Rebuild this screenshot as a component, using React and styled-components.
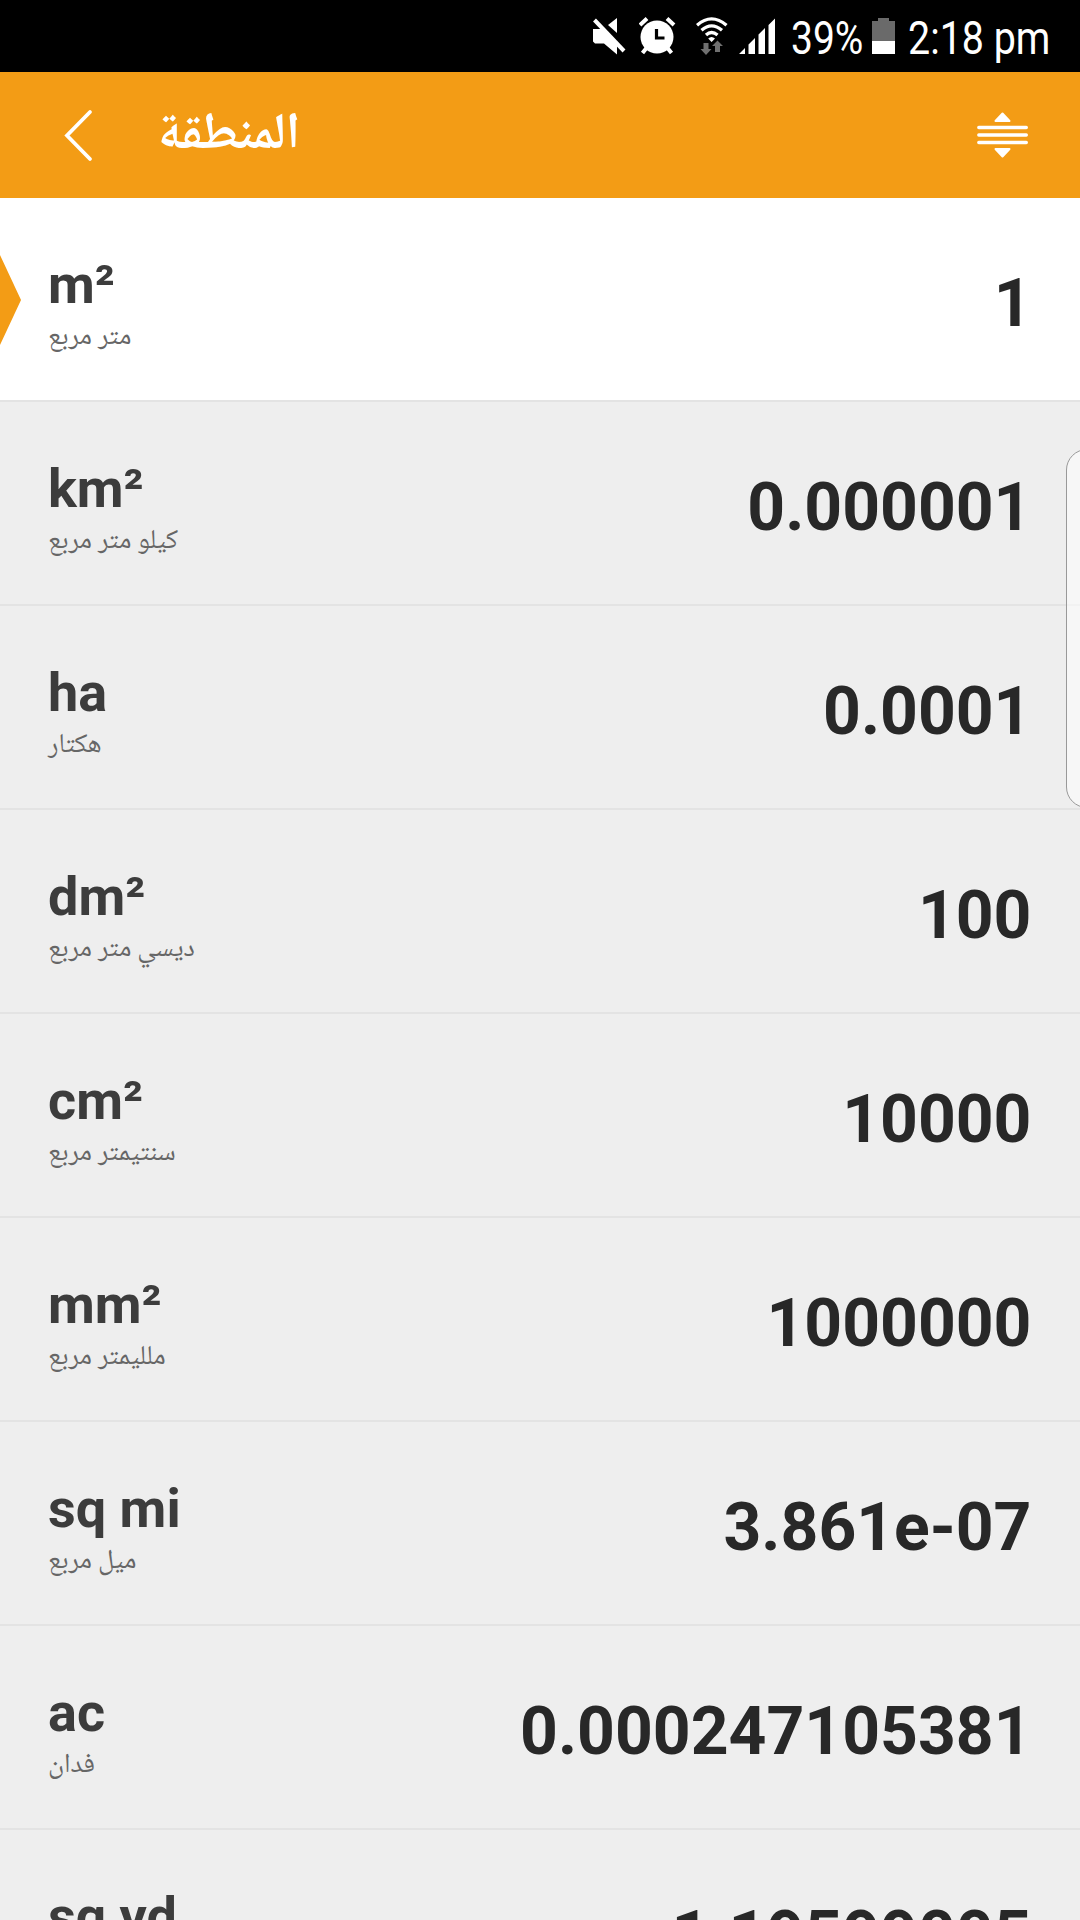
import React from 'react';
import styled, { createGlobalStyle } from 'styled-components';

const orange = '#f39c15';
const latin = `Roboto, 'Liberation Sans', sans-serif`;
const arabic = `'Noto Naskh Arabic', 'Noto Sans Arabic', 'DejaVu Sans', sans-serif`;

const GlobalStyle = createGlobalStyle`
  * {
    box-sizing: border-box;
  }

  body {
    margin: 0;
    background-color: #eeeeee;
    overflow: hidden;
  }
`;

const Screen = styled.div`
  position: relative;
  width: 1080px;
  height: 1920px;
  overflow: hidden;
  display: flex;
  flex-direction: column;
  font-family: ${latin};
  background-color: #eeeeee;
`;

const StatusBar = styled.div`
  flex: none;
  height: 72px;
  padding-left: 592px;
  display: flex;
  align-items: center;
  background-color: #000;
  color: #fff;

  svg {
    flex: none;
    display: block;
  }
`;

const StatusText = styled.div`
  flex: none;
  width: ${({ width }) => width}px;
  height: 72px;
  line-height: 76px;
  font-size: 46px;
  white-space: nowrap;

  span {
    display: inline-block;
    transform: scaleX(${({ stretch }) => stretch});
    transform-origin: left center;
  }
`;

const Gap = styled.div`
  flex: none;
  width: ${({ size }) => size}px;
`;

const Header = styled.header`
  flex: none;
  height: 126px;
  padding: 0 51px 0 64px;
  display: flex;
  align-items: center;
  background-color: ${orange};
`;

const HeaderTitle = styled.h1`
  flex: 1;
  margin: 0 0 0 64px;
  padding-top: 3px;
  color: #fff;
  font-family: ${arabic};
  font-size: 51px;
  font-weight: 700;
  line-height: 60px;
`;

const UnitRow = styled.div`
  position: relative;
  flex: none;
  height: 204px;
  padding: 0 48.5px 0 48px;
  display: flex;
  align-items: center;
  justify-content: space-between;
  border-bottom: 2px solid #e3e3e3;
  background-color: ${({ active }) => (active ? '#fff' : '#eeeeee')};
`;

const ActiveMarker = styled.svg`
  position: absolute;
  left: 0;
  top: 57px;
`;

const UnitLabel = styled.div`
  padding-top: 7px;
`;

const Symbol = styled.div`
  height: 64px;
  line-height: 64px;
  font-size: 54px;
  font-weight: 700;
  color: #3c3c3c;
`;

const UnitName = styled.div`
  height: 36px;
  line-height: 43px;
  font-family: ${arabic};
  font-size: 27.3px;
  color: #666;
`;

const Amount = styled.div`
  padding-top: 9px;
  font-size: 66px;
  font-weight: 700;
  color: #282828;
`;

const EdgeHandle = styled.div`
  position: absolute;
  top: 449px;
  left: 1065.5px;
  width: 42px;
  height: 359px;
  border: 1.5px solid #999;
  border-radius: 21px;
  background-color: rgba(255, 255, 255, 0.55);
`;

const units = [
  { symbol: 'm²', name: 'متر مربع', amount: '1' },
  { symbol: 'km²', name: 'كيلو متر مربع', amount: '0.000001' },
  { symbol: 'ha', name: 'هكتار', amount: '0.0001' },
  { symbol: 'dm²', name: 'ديسي متر مربع', amount: '100' },
  { symbol: 'cm²', name: 'سنتيمتر مربع', amount: '10000' },
  { symbol: 'mm²', name: 'ملليمتر مربع', amount: '1000000' },
  { symbol: 'sq mi', name: 'ميل مربع', amount: '3.861e-07' },
  { symbol: 'ac', name: 'فدان', amount: '0.000247105381' },
  { symbol: 'sq yd', name: 'ياردة مربعة', amount: '1.19599005' }
];

function MuteIcon() {
  return (
    <svg width="36" height="38" viewBox="0 0 36 38" fill="#fff">
      <path d="M25 1v15L16 8Z" />
      <path d="M3.500 3 32.500 34" stroke="#000" strokeWidth="7" />
      <path d="M2.500 3 32 34" stroke="#fff" strokeWidth="4" />
      <path d="M1 12h9l15 15v10.500L12 26.500H3L1 24.500Z" />
    </svg>
  );
}

function AlarmIcon() {
  return (
    <svg width="38" height="38" viewBox="0 0 38 38" fill="none">
      <circle cx="18" cy="20" r="16.500" fill="#fff" />
      <path
        d="M1 8 8 1.500M28 1.500 35 8M7.500 31 3.500 36M28.500 31l4 5"
        stroke="#fff"
        strokeWidth="4"
      />
      <path d="M17.500 12v9h8" stroke="#000" strokeWidth="3.200" />
    </svg>
  );
}

function WifiIcon() {
  return (
    <svg width="32" height="38" viewBox="0 0 32 38" fill="none">
      <path
        d="M1 8.200Q15.500-4.500 30.500 8.200M5.500 13.200Q15.500 4.500 26 13.200M10 18Q15.500 13 21.500 18"
        stroke="#fff"
        strokeWidth="3.300"
      />
      <path d="M12.200 21.500Q15.500 18.500 19 21.500L15.600 25Z" fill="#fff" />
      <path
        d="M7.500 26h5v6h3l-5.500 6-5.500-6h3ZM19 35v-6h-3l5.500-5.500L27 29h-3v6Z"
        fill="#707070"
      />
    </svg>
  );
}

function SignalIcon() {
  return (
    <svg width="37" height="36" viewBox="0 0 37 36" fill="#fff">
      <path d="M0 36l6-6v6ZM9.500 36V26.500l6.500-6.500v16ZM19.500 36V16.500l6.500-6.500v26ZM29.500 36V7L36 .500V36Z" />
    </svg>
  );
}

function BatteryIcon() {
  return (
    <svg width="23" height="36" viewBox="0 0 23 36">
      <path d="M0 3h6V0h11v3h6v20H0Z" fill="#6a6a6a" />
      <path d="M0 23h23v13H0Z" fill="#fff" />
    </svg>
  );
}

function BackIcon() {
  return (
    <svg width="30" height="54" viewBox="0 0 30 54" fill="none">
      <path
        d="M26 4 3 27.500 26 51"
        stroke="#fff"
        strokeWidth="3.800"
        strokeLinecap="round"
      />
    </svg>
  );
}

function ReorderIcon() {
  return (
    <svg width="52" height="46" viewBox="0 0 52 46" fill="#fff">
      <path
        d="M1.800 15.500h47.500M1.800 23h47.500M1.800 30.500h47.500"
        stroke="#fff"
        strokeWidth="3.400"
        strokeLinecap="round"
      />
      <path
        d="M25.500 1.500 32.500 9H18.500ZM25.500 44.500 32.500 37H18.500Z"
        stroke="#fff"
        strokeWidth="2"
        strokeLinejoin="round"
      />
    </svg>
  );
}

export default function App() {
  return (
    <>
      <GlobalStyle />
      <Screen>
        <StatusBar>
          <MuteIcon />
          <Gap size={11} />
          <AlarmIcon />
          <Gap size={19} />
          <WifiIcon />
          <Gap size={11} />
          <SignalIcon />
          <Gap size={15} />
          <StatusText width={81} stretch={0.847}>
            <span>39%</span>
          </StatusText>
          <BatteryIcon />
          <Gap size={13} />
          <StatusText width={150} stretch={0.856}>
            <span>2:18 pm</span>
          </StatusText>
        </StatusBar>
        <Header>
          <BackIcon />
          <HeaderTitle>المنطقة</HeaderTitle>
          <ReorderIcon />
        </Header>
        {units.map((unit, index) => (
          <UnitRow key={unit.symbol} active={index === 0 ? 1 : 0}>
            {index === 0 && (
              <ActiveMarker width="21" height="90" viewBox="0 0 21 90">
                <path d="M0 0 21 45 0 90Z" fill={orange} />
              </ActiveMarker>
            )}
            <UnitLabel>
              <Symbol>{unit.symbol}</Symbol>
              <UnitName>{unit.name}</UnitName>
            </UnitLabel>
            <Amount>{unit.amount}</Amount>
          </UnitRow>
        ))}
        <EdgeHandle />
      </Screen>
    </>
  );
}
